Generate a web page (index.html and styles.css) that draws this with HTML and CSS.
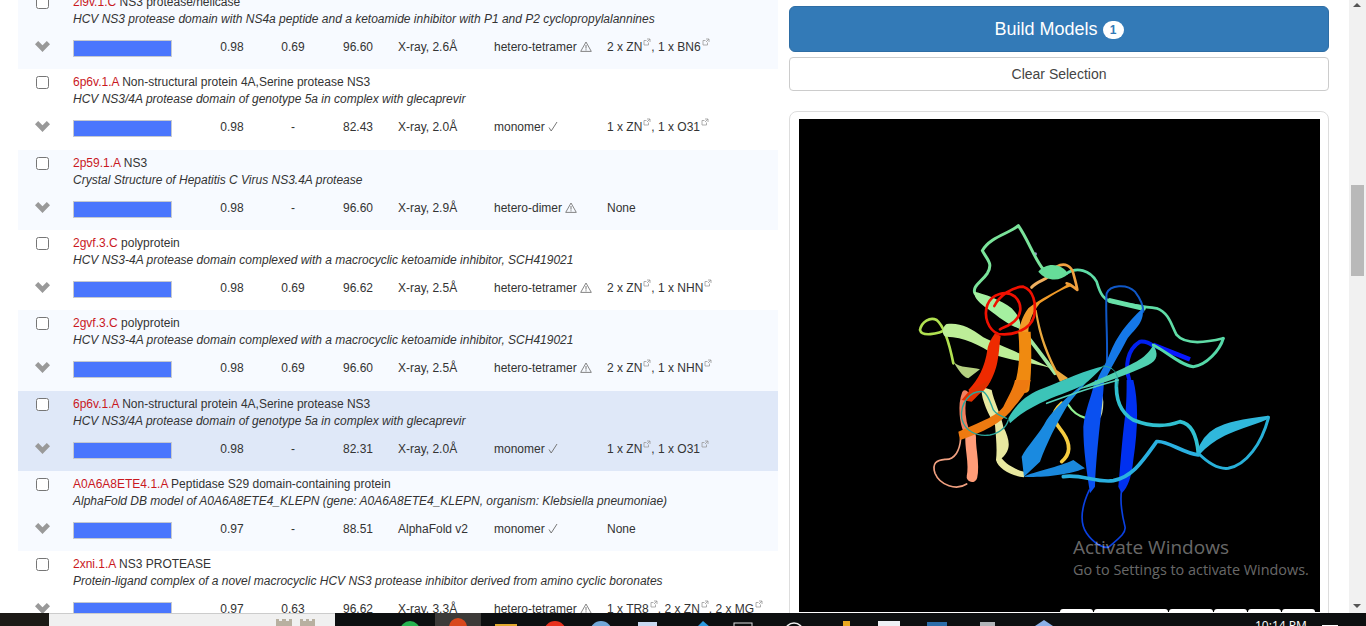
FILE: index.html
```html
<!DOCTYPE html>
<html lang="en">

<head>
 <meta charset="UTF-8">
 <meta name="viewport" content="width=device-width, initial-scale=1.0">
 <title>Template Results</title>
 <link rel="stylesheet" href="styles.css">
</head>

<body>
 <svg class="defs" width="0" height="0">
  <symbol id="chevron" viewBox="0 0 15 11"><path d="M0 3.2 3.2 0 7.5 4.3 11.8 0 15 3.2 7.5 11Z"/></symbol>
  <symbol id="ext" viewBox="0 0 8 8"><path d="M5.5 4.5V7H1V2.5H3.5M4 1H7V4M7 1 4 4" fill="none" stroke="currentColor" stroke-width=".8"/></symbol>
  <symbol id="warn" viewBox="0 0 12 11"><path d="M6 1 11.3 10.4H.7Z" fill="none" stroke="currentColor" stroke-width=".9"/><path d="M6 4V7.6M6 8.3V9.4" fill="none" stroke="currentColor"/></symbol>
  <symbol id="tick" viewBox="0 0 10 11"><path d="M1 6.5 3.2 10 9 1" fill="none" stroke="currentColor" stroke-width="1"/></symbol>
 </svg>

 <div class="window">
  <div class="page">
   <!-- Template list, scrolled part of the way down -->
   <div class="list">
    <div class="row tint">
     <div class="pick"><input type="checkbox"><svg class="chevron"><use href="#chevron"/></svg></div>
     <div class="info">
      <div class="title"><span class="code">2l9v.1.C</span> NS3 protease/helicase</div>
      <div class="desc">HCV NS3 protease domain with NS4a peptide and a ketoamide inhibitor with P1 and P2 cyclopropylalannines</div>
      <div class="stats">
       <div class="bar"></div><div class="num">0.98</div><div class="num wide">0.69</div><div class="num wider">96.60</div>
       <div class="method">X-ray, 2.6Å</div>
       <div class="oligo">hetero-tetramer <svg class="warn"><use href="#warn"/></svg></div>
       <div>2 x ZN<svg class="ext"><use href="#ext"/></svg>, 1 x BN6<svg class="ext"><use href="#ext"/></svg></div>
      </div>
     </div>
    </div>
    <div class="row">
     <div class="pick"><input type="checkbox"><svg class="chevron"><use href="#chevron"/></svg></div>
     <div class="info">
      <div class="title"><span class="code">6p6v.1.A</span> Non-structural protein 4A,Serine protease NS3</div>
      <div class="desc">HCV NS3/4A protease domain of genotype 5a in complex with glecaprevir</div>
      <div class="stats">
       <div class="bar"></div><div class="num">0.98</div><div class="num wide">-</div><div class="num wider">82.43</div>
       <div class="method">X-ray, 2.0Å</div>
       <div class="oligo">monomer <svg class="tick"><use href="#tick"/></svg></div>
       <div>1 x ZN<svg class="ext"><use href="#ext"/></svg>, 1 x O31<svg class="ext"><use href="#ext"/></svg></div>
      </div>
     </div>
    </div>
    <div class="row tint">
     <div class="pick"><input type="checkbox"><svg class="chevron"><use href="#chevron"/></svg></div>
     <div class="info">
      <div class="title"><span class="code">2p59.1.A</span> NS3</div>
      <div class="desc">Crystal Structure of Hepatitis C Virus NS3.4A protease</div>
      <div class="stats">
       <div class="bar"></div><div class="num">0.98</div><div class="num wide">-</div><div class="num wider">96.60</div>
       <div class="method">X-ray, 2.9Å</div>
       <div class="oligo">hetero-dimer <svg class="warn"><use href="#warn"/></svg></div>
       <div>None</div>
      </div>
     </div>
    </div>
    <div class="row">
     <div class="pick"><input type="checkbox"><svg class="chevron"><use href="#chevron"/></svg></div>
     <div class="info">
      <div class="title"><span class="code">2gvf.3.C</span> polyprotein</div>
      <div class="desc">HCV NS3-4A protease domain complexed with a macrocyclic ketoamide inhibitor, SCH419021</div>
      <div class="stats">
       <div class="bar"></div><div class="num">0.98</div><div class="num wide">0.69</div><div class="num wider">96.62</div>
       <div class="method">X-ray, 2.5Å</div>
       <div class="oligo">hetero-tetramer <svg class="warn"><use href="#warn"/></svg></div>
       <div>2 x ZN<svg class="ext"><use href="#ext"/></svg>, 1 x NHN<svg class="ext"><use href="#ext"/></svg></div>
      </div>
     </div>
    </div>
    <div class="row tint">
     <div class="pick"><input type="checkbox"><svg class="chevron"><use href="#chevron"/></svg></div>
     <div class="info">
      <div class="title"><span class="code">2gvf.3.C</span> polyprotein</div>
      <div class="desc">HCV NS3-4A protease domain complexed with a macrocyclic ketoamide inhibitor, SCH419021</div>
      <div class="stats">
       <div class="bar"></div><div class="num">0.98</div><div class="num wide">0.69</div><div class="num wider">96.60</div>
       <div class="method">X-ray, 2.5Å</div>
       <div class="oligo">hetero-tetramer <svg class="warn"><use href="#warn"/></svg></div>
       <div>2 x ZN<svg class="ext"><use href="#ext"/></svg>, 1 x NHN<svg class="ext"><use href="#ext"/></svg></div>
      </div>
     </div>
    </div>
    <div class="row active">
     <div class="pick"><input type="checkbox"><svg class="chevron"><use href="#chevron"/></svg></div>
     <div class="info">
      <div class="title"><span class="code">6p6v.1.A</span> Non-structural protein 4A,Serine protease NS3</div>
      <div class="desc">HCV NS3/4A protease domain of genotype 5a in complex with glecaprevir</div>
      <div class="stats">
       <div class="bar"></div><div class="num">0.98</div><div class="num wide">-</div><div class="num wider">82.31</div>
       <div class="method">X-ray, 2.0Å</div>
       <div class="oligo">monomer <svg class="tick"><use href="#tick"/></svg></div>
       <div>1 x ZN<svg class="ext"><use href="#ext"/></svg>, 1 x O31<svg class="ext"><use href="#ext"/></svg></div>
      </div>
     </div>
    </div>
    <div class="row tint">
     <div class="pick"><input type="checkbox"><svg class="chevron"><use href="#chevron"/></svg></div>
     <div class="info">
      <div class="title"><span class="code">A0A6A8ETE4.1.A</span> Peptidase S29 domain-containing protein</div>
      <div class="desc">AlphaFold DB model of A0A6A8ETE4_KLEPN (gene: A0A6A8ETE4_KLEPN, organism: Klebsiella pneumoniae)</div>
      <div class="stats">
       <div class="bar"></div><div class="num">0.97</div><div class="num wide">-</div><div class="num wider">88.51</div>
       <div class="method">AlphaFold v2</div>
       <div class="oligo">monomer <svg class="tick"><use href="#tick"/></svg></div>
       <div>None</div>
      </div>
     </div>
    </div>
    <div class="row">
     <div class="pick"><input type="checkbox"><svg class="chevron"><use href="#chevron"/></svg></div>
     <div class="info">
      <div class="title"><span class="code">2xni.1.A</span> NS3 PROTEASE</div>
      <div class="desc">Protein-ligand complex of a novel macrocyclic HCV NS3 protease inhibitor derived from amino cyclic boronates</div>
      <div class="stats">
       <div class="bar"></div><div class="num">0.97</div><div class="num wide">0.63</div><div class="num wider">96.62</div>
       <div class="method">X-ray, 3.3Å</div>
       <div class="oligo">hetero-tetramer <svg class="warn"><use href="#warn"/></svg></div>
       <div>1 x TR8<svg class="ext"><use href="#ext"/></svg>, 2 x ZN<svg class="ext"><use href="#ext"/></svg>, 2 x MG<svg class="ext"><use href="#ext"/></svg></div>
      </div>
     </div>
    </div>
   </div>

   <!-- Right side: actions and structure viewer -->
   <div class="side">
    <button class="build">Build Models <span class="badge">1</span></button>
    <button class="clear">Clear Selection</button>
    <div class="card">
     <div class="viewer">
      <svg class="ribbons" viewBox="799 119 521 494" fill="none" stroke-linecap="round" stroke-linejoin="round">
       <g transform="translate(900 210) scale(.3333)">
        <circle cx="406" cy="132" r="5" fill="#8f88c8"/>
        <!-- green loop at the top -->
        <path d="M430 178C405 150 385 90 355 47C330 70 270 80 247 122C262 150 280 160 262 190C245 215 215 230 225 250" stroke="#7ae39a" stroke-width="9"/>
        <path d="M222 245C250 250 305 270 335 295C360 320 365 345 358 355C330 350 295 320 265 298C240 280 222 265 222 245Z" fill="#a5f0a0"/>
        <path d="M355 345C395 395 430 440 465 490" stroke="#a0e8a0" stroke-width="11"/>
        <path d="M500 190C530 170 570 180 590 215C600 250 610 275 650 278C700 285 730 290 770 295C810 310 815 350 830 375C860 410 930 395 970 385" stroke="#5fdca6" stroke-width="8"/>
        <path d="M630 272 730 295" stroke="#68e0a8" stroke-width="15"/>
        <!-- orange strands behind the knot -->
        <path d="M395 232C410 215 430 212 445 200" stroke="#f0b060" stroke-width="9"/>
        <path d="M470 170C495 155 515 170 520 190C525 210 530 225 532 240C520 230 510 222 500 220" stroke="#f2a040" stroke-width="8"/>
        <path d="M410 300C420 350 430 400 470 480L505 505 480 515C440 440 415 380 405 300Z" fill="#eaa83e"/>
        <path d="M510 218C470 245 420 265 385 295C365 320 360 350 355 370L385 370C385 340 395 310 420 280C450 260 490 235 515 228Z" fill="#f09a28"/>
        <path d="M415 185C440 155 485 160 505 192C480 215 440 215 415 185Z" fill="#66dd99"/>
        <!-- pale strands, left -->
        <path d="M145 355C110 375 65 380 60 360C65 335 90 320 110 330C135 350 150 410 160 460" stroke="#b0e050" stroke-width="8"/>
        <path d="M140 342C180 337 210 352 250 382C300 407 380 437 455 475C400 460 330 450 285 435C240 405 190 380 140 380C122 378 128 348 140 342Z" fill="#bdee98"/>
        <path d="M160 455C180 475 215 470 240 478L205 505C185 500 170 470 160 455Z" fill="#b5d080"/>
        <path d="M245 530 275 540C280 570 305 620 310 650C330 690 335 720 305 745C320 765 350 780 372 785V802C330 797 295 775 288 750C292 720 288 680 285 645C265 615 240 560 245 530Z" fill="#e8e8a0"/>
        <path d="M485 580C440 620 470 640 490 670C510 700 515 730 485 755" stroke="#f5cc40" stroke-width="11"/>
        <path d="M505 585C520 610 540 620 560 625" stroke="#90f090" stroke-width="7"/>
        <path d="M605 560C610 580 605 610 600 620" stroke="#d0e0a0" stroke-width="6"/>
        <!-- salmon tail -->
        <path d="M195 550C180 590 190 640 198 660" stroke="#f08060" stroke-width="18"/>
        <path d="M212 680C210 720 225 760 216 800" stroke="#ff9c78" stroke-width="32"/>
        <path d="M200 822C170 842 120 827 105 790C95 760 110 750 135 748C165 750 180 720 182 685" stroke="#f0a080" stroke-width="5"/>
        <!-- red helix and strand -->
        <path d="M285 370 302 378C295 420 300 470 265 525C240 560 220 560 205 540C235 510 255 470 262 420C265 400 275 385 285 370Z" fill="#ee2a00"/>
        <path d="M270 510 210 540 185 570 215 575C240 550 260 530 272 512Z" fill="#e03000"/>
        <path d="M283 288C300 255 340 230 370 230C400 240 410 280 402 320C390 360 340 378 295 372C265 360 250 320 262 285C275 250 320 240 345 260C370 285 365 320 335 340C320 350 310 352 300 358" stroke="#f01000" stroke-width="8"/>
        <!-- orange strand -->
        <path d="M355 365H392C395 420 395 490 388 540C380 560 345 540 340 535C360 480 360 420 355 365Z" fill="#f08a10"/>
        <path d="M345 510H392C385 540 360 570 335 600C310 630 270 660 180 690L175 665C230 640 290 620 310 590C325 560 340 535 345 510Z" fill="#ee7a10"/>
        <!-- blue strands -->
        <path d="M688 510C675 470 680 420 720 395C740 393 750 400 760 408" stroke="#0020f0" stroke-width="12"/>
        <path d="M760 405 870 448" stroke="#0818ff" stroke-width="14" stroke-linecap="butt"/>
        <path d="M585 510H612C610 580 590 700 585 830L570 850C560 780 550 720 550 650C555 600 575 560 585 510Z" fill="#0a50f0"/>
        <path d="M680 510H700C715 570 715 650 700 750C695 800 685 830 665 850L655 830C660 780 665 700 675 620C680 580 680 540 680 510Z" fill="#0030f0"/>
        <path d="M568 840C540 900 540 940 560 970C580 1000 610 1015 625 1012C650 990 680 970 675 950C665 910 660 870 665 840" stroke="#0a40e0" stroke-width="5"/>
        <path d="M620 470C625 400 615 300 620 250C630 225 680 220 705 245C720 265 730 290 730 305" stroke="#1058c8" stroke-width="6"/>
        <path d="M728 295C735 340 700 360 680 390C660 430 640 460 620 500L585 535C590 500 615 470 630 430C650 380 680 340 728 295Z" fill="#1578e8"/>
        <path d="M560 515C510 550 460 600 440 630C420 670 380 710 365 740L372 800 420 755C440 700 470 640 500 590C520 560 550 530 560 515Z" fill="#1a8ae0"/>
        <path d="M372 800C400 785 480 770 520 750L555 775C520 790 440 805 372 800Z" fill="#1a88dc"/>
        <!-- cyan tail, right -->
        <path d="M490 800C540 790 590 820 640 812C700 800 730 750 770 695C800 690 850 730 895 735" stroke="#2ab0e0" stroke-width="11"/>
        <path d="M650 510C645 570 665 610 700 630C750 650 800 650 840 635C870 640 890 670 895 730" stroke="#30c0d0" stroke-width="11"/>
        <path d="M895 730C915 665 950 640 1105 622C1040 650 960 660 895 730Z" fill="#30b8dc" stroke="#30b8dc" stroke-width="10"/>
        <path d="M895 730C930 765 960 778 985 775C1040 765 1085 700 1105 625" stroke="#28b0d8" stroke-width="9"/>
        <!-- green return and teal strand on top -->
        <path d="M970 385C960 420 920 465 880 470C840 465 800 425 760 405" stroke="#55d8a8" stroke-width="9"/>
        <path d="M760 405C775 430 775 450 745 465C690 490 620 520 530 540C610 500 690 470 725 445C745 430 755 415 760 405Z" fill="#50d0b0"/>
        <path d="M325 625C350 580 385 550 430 535C490 510 560 480 612 468C590 490 570 510 550 525C510 545 460 560 420 580C380 600 350 620 330 640Z" fill="#3cc4b8"/>
        <path d="M610 468C640 470 660 490 652 530" stroke="#2aa8a0" stroke-width="3"/>
        <path d="M655 510C600 525 520 550 440 580" stroke="#55d0b8" stroke-width="5"/>
        <path d="M325 630C320 650 300 670 270 675C230 680 195 665 185 625C180 580 210 540 250 545C265 555 270 575 280 600C290 615 305 620 320 625" stroke="#2aa59a" stroke-width="4"/>
       </g>
      </svg>
      <div class="tools">
       <span class="tool t1"></span><span class="tool t2"></span><span class="tool t3"></span><span class="tool t4"></span><span class="tool t4"></span><span class="tool t1"></span>
      </div>
     </div>
    </div>
   </div>

   <div class="activate">
    <div class="activate-big">Activate Windows</div>
    <div class="activate-small">Go to Settings to activate Windows.</div>
   </div>

   <div class="scrollbar">
    <span class="arrow up"></span>
    <div class="thumb"></div>
    <span class="arrow down"></span>
   </div>
  </div>

  <!-- Windows taskbar, only its top edge is visible -->
  <div class="taskbar">
   <div class="start"></div>
   <div class="search">
    <svg class="castle" viewBox="0 0 39 7"><path d="M0 7V0H3V2H6V0H10V2H13V0H16V7ZM24 7V0H27V2H30V0H33V2H36V0H39V7Z" fill="#b8b0a0"/></svg>
   </div>
   <svg class="tray" viewBox="335 0 920 13">
    <rect x="435" width="46" height="13" fill="#3c3a38"/>
    <circle cx="410" cy="18" r="10" fill="#27b34f"/>
    <circle cx="458" cy="14" r="9" fill="#d8481c"/>
    <rect x="495" y="11" width="22" height="4" fill="#e0a82c"/>
    <circle cx="555" cy="19" r="11" fill="#e8301c"/>
    <circle cx="601" cy="19" r="11" fill="#72a8d8"/>
    <rect x="638" y="9" width="19" height="6" fill="#c8d8f0"/>
    <path d="M703 8 710 14H697Z" fill="#2a9ae0"/>
    <rect x="734" y="10" width="18" height="5" fill="none" stroke="#ddd"/>
    <circle cx="794" cy="19" r="9" fill="none" stroke="#eee" stroke-width="1.5"/>
    <rect x="843" y="8" width="7" height="5" fill="#e8a820"/>
    <rect x="878" y="8" width="22" height="5" fill="#eef0f4"/>
    <rect x="927" y="9" width="20" height="4" fill="#2a6ca8"/>
    <rect x="980" y="9" width="15" height="4" fill="#b0b4b8"/>
    <path d="M1044 7 1053 13H1035Z" fill="#8ab0e8"/>
   </svg>
   <div class="clock">10:14 PM</div>
   <div class="notify"></div>
  </div>
 </div>
</body>

</html>
```

FILE: styles.css
```css
* {
 box-sizing: border-box;
}

body {
 margin: 0;
 background: #fff;
 font-family: "Liberation Sans", Arial, sans-serif;
 font-size: 12px;
 color: #333;
}

.defs {
 position: absolute;
}

.window {
 display: flex;
 flex-direction: column;
 height: 626px;
 overflow: hidden;
}

.page {
 position: relative;
 display: flex;
 flex: 1;
 min-height: 0;
 overflow: hidden;
 padding-left: 18px;
}

/* Template rows */
.list {
 width: 760px;
 margin-top: -11px;
 flex-shrink: 0;
}

.row {
 display: flex;
 height: 80.33px;
}

.tint {
 background: #f7faff;
}

.active {
 background: #dfe8f8;
}

.pick {
 display: flex;
 flex-direction: column;
 align-items: center;
 width: 55px;
 padding: 7px 6px 0 0;
}

.pick input {
 width: 13px;
 height: 13px;
 margin: 0;
}

.chevron {
 width: 15px;
 height: 11px;
 margin-top: 32px;
 fill: #999;
}

.info {
 flex: 1;
 padding-top: 5px;
 line-height: 17px;
}

.title {
 height: 17px;
 white-space: nowrap;
}

.code {
 color: #c9181e;
}

.desc {
 height: 17px;
 font-style: italic;
 white-space: nowrap;
}

.stats {
 display: flex;
 align-items: flex-start;
 height: 17px;
 margin-top: 12px;
 line-height: 14px;
 white-space: nowrap;
}

.bar {
 width: 99px;
 height: 17px;
 margin-right: 30px;
 background: #4a76fd;
 border: 1px solid #c4c8d0;
}

.num {
 width: 60px;
 text-align: center;
}

.wide {
 width: 62px;
}

.wider {
 width: 68px;
}

.method {
 width: 96px;
 padding-left: 6px;
 margin-right: 6px;
}

.oligo {
 width: 113px;
}

.warn {
 width: 12px;
 height: 11px;
 margin-top: -2px;
 color: #777;
 vertical-align: -1px;
}

.tick {
 width: 10px;
 height: 11px;
 margin-top: -2px;
 color: #777;
 vertical-align: -1px;
}

.ext {
 width: 8px;
 height: 8px;
 margin-top: -6px;
 margin-left: 1px;
 color: #999;
 vertical-align: 5px;
}

/* Right column */
.side {
 display: flex;
 flex-direction: column;
 width: 540px;
 margin-left: 11px;
 padding-top: 6px;
 flex-shrink: 0;
}

.build {
 height: 46px;
 background: #337ab7;
 border: 1px solid #2e6da4;
 border-radius: 6px;
 color: #fff;
 font-family: inherit;
 font-size: 18px;
}

.badge {
 display: inline-block;
 min-width: 21px;
 height: 18px;
 padding: 0 7px;
 border-radius: 10px;
 background: #fff;
 color: #337ab7;
 font-size: 12px;
 font-weight: bold;
 line-height: 18px;
 vertical-align: 1px;
}

.clear {
 height: 34px;
 margin-top: 5px;
 background: #fff;
 border: 1px solid #ccc;
 border-radius: 4px;
 color: #444;
 font-family: inherit;
 font-size: 14px;
}

.card {
 flex: 1;
 min-height: 0;
 margin-top: 20px;
 margin-bottom: -20px;
 padding: 7px 8px 20px 9px;
 border: 1px solid #ddd;
 border-radius: 8px;
}

.viewer {
 position: relative;
 height: 100%;
 background: #000;
}

.ribbons {
 display: block;
 width: 521px;
 height: 494px;
}

.tools {
 position: absolute;
 top: 490px;
 left: 261px;
 display: flex;
 gap: 1px;
}

.tool {
 height: 8px;
 background: #fff;
 border-radius: 3px 3px 0 0;
}

.t1 { width: 33px; }
.t2 { width: 74px; }
.t3 { width: 44px; }
.t4 { width: 33px; }

.activate {
 position: absolute;
 top: 535px;
 left: 1073px;
 color: rgba(255, 255, 255, 0.42);
 font-family: "Open Sans", sans-serif;
 white-space: nowrap;
}

.activate-big {
 font-size: 19px;
 line-height: 24px;
}

.activate-small {
 margin-top: 2px;
 font-size: 14.4px;
 line-height: 18px;
}

/* Browser scrollbar */
.scrollbar {
 position: absolute;
 top: 0;
 right: 0;
 bottom: 0;
 width: 17px;
 background: #f1f1f1;
}

.thumb {
 position: absolute;
 top: 185px;
 left: 2px;
 width: 13px;
 height: 91px;
 background: #b9b9b9;
}

.arrow {
 position: absolute;
 left: 4px;
 border-left: 4px solid transparent;
 border-right: 4px solid transparent;
}

.up {
 top: 3px;
 border-bottom: 4px solid #555;
}

.down {
 bottom: 5px;
 border-top: 4px solid #555;
}

/* Taskbar */
.taskbar {
 display: flex;
 height: 13px;
 flex-shrink: 0;
 overflow: hidden;
 background: #0d0f10;
 color: #fff;
}

.start {
 width: 49px;
 background: #1c1a16;
}

.search {
 display: flex;
 justify-content: flex-end;
 width: 286px;
 padding: 5px 20px 0 0;
 background: #f0f0f0;
 border-top: 1px solid #ccc;
}

.castle {
 width: 39px;
 height: 7px;
}

.tray {
 width: 920px;
 height: 13px;
}

.clock {
 width: 67px;
 padding-top: 6px;
 font-family: "Open Sans", sans-serif;
 font-size: 12px;
 line-height: 14px;
}

.notify {
 width: 16px;
 margin-top: 12px;
 background: #fff;
}
```
